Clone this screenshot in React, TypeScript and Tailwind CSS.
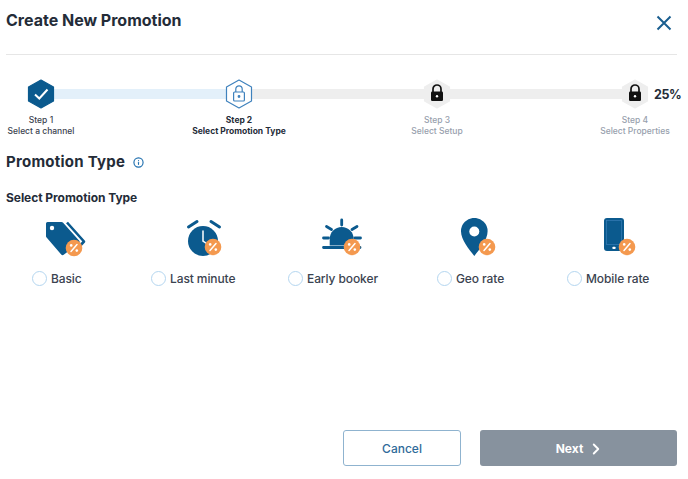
import React from 'react';
import { ChevronRight, Info } from 'lucide-react';

const BLUE = '#0b5a8e';

const Hex: React.FC<{ fill: string; stroke?: string; children?: React.ReactNode }> = ({ fill, stroke, children }) => (
  <svg width="30" height="30" viewBox="0 0 30 30" className="block">
    <polygon points="15,1 27.5,8 27.5,22 15,29 2.5,22 2.5,8" fill={fill} stroke={stroke ?? fill} strokeWidth="1.2" strokeLinejoin="round" />
    {children}
  </svg>
);

const SolidLock = () => (
  <g>
    <path d="M11 13v-3a4 4 0 0 1 8 0v3" fill="none" stroke="#111" strokeWidth="1.7" />
    <rect x="9" y="12.5" width="12" height="9.5" rx="1.2" fill="#111" />
    <circle cx="15" cy="17.2" r="1.2" fill="#fff" />
  </g>
);

const OutlineLock = () => (
  <g fill="none" stroke="#3f82bd" strokeWidth="1.2">
    <path d="M11.8 13v-3a3.2 3.2 0 0 1 6.4 0v3" />
    <rect x="9.6" y="13" width="10.8" height="9" rx="1" />
    <circle cx="15" cy="17.5" r="0.8" fill="#3f82bd" />
  </g>
);

const Badge: React.FC<{ cx: number; cy: number }> = ({ cx, cy }) => (
  <g transform={`translate(${cx} ${cy})`}>
    <circle r="8.3" fill="#f4994f" />
    <path d="M3 -3.4L-3 3.4" stroke="#fff" strokeWidth="1.5" strokeLinecap="round" />
    <circle cx="-2.8" cy="-2.6" r="1.3" fill="#fff" />
    <circle cx="2.8" cy="2.6" r="1.3" fill="#fff" />
  </g>
);

const TagIcon = () => (
  <svg width="42" height="40" viewBox="0 0 42 40" className="block">
    <path d="M1.5 4h14a2 2 0 0 1 1.4.6L33 22.5a2 2 0 0 1 0 2.8L18 36.5a2 2 0 0 1-2.8 0L.6 19.5A2 2 0 0 1 0 18V5.5A1.5 1.5 0 0 1 1.5 4z" fill={BLUE} />
    <circle cx="6" cy="10" r="2.2" fill="#fff" />
    <path d="M21 4.5L38 23.5L32 30" fill="none" stroke={BLUE} strokeWidth="2.6" strokeLinejoin="round" />
    <Badge cx={28} cy={30} />
  </svg>
);

const ClockIcon = () => (
  <svg width="40" height="40" viewBox="0 0 40 40" className="block">
    <circle cx="17" cy="23" r="15" fill={BLUE} />
    <path d="M2.5 9L11 3.5M25 3.5L33.5 9" stroke={BLUE} strokeWidth="3" strokeLinecap="round" />
    <path d="M17 13V23L22 26.5" fill="none" stroke="#fff" strokeWidth="1.5" strokeLinecap="round" />
    <Badge cx={27} cy={29} />
  </svg>
);

const SunIcon = () => (
  <svg width="42" height="40" viewBox="0 0 42 40" className="block">
    <path d="M8.7 27.5V21a12 12 0 0 1 24 0v6.5z" fill={BLUE} />
    <path d="M20.7 2V7M5.5 8.5L10.5 11.5M31 11.5L36 8.5M2.5 20H7.5M34 20H39.5M2.5 29.5H39" stroke={BLUE} strokeWidth="2.8" strokeLinecap="round" />
    <Badge cx={31} cy={29} />
  </svg>
);

const PinIcon = () => (
  <svg width="40" height="40" viewBox="0 0 40 40" className="block">
    <path d="M14.3 38C9 31 1 22 1 13.2a13.3 13.3 0 0 1 26.6 0C27.6 22 19.6 31 14.3 38z" fill={BLUE} />
    <circle cx="14.3" cy="13.5" r="5" fill="#fff" />
    <Badge cx={27} cy={29} />
  </svg>
);

const PhoneIcon = () => (
  <svg width="40" height="40" viewBox="0 0 40 40" className="block">
    <rect x="0" y="0" width="20" height="33" rx="3" fill={BLUE} />
    <rect x="2.5" y="2.5" width="15" height="24" fill="none" stroke="#3f82bd" strokeWidth="0.6" />
    <rect x="8.3" y="28.7" width="3.4" height="2.4" rx="1" fill="#fff" />
    <Badge cx={23} cy={29} />
  </svg>
);

const steps = [
  { n: 'Step 1', label: 'Select a channel', cls: 'font-medium text-[#3b4350]', icon: <Hex fill={BLUE}><path d="M9 15.5L13.3 19.5L21.5 10.5" fill="none" stroke="#fff" strokeWidth="2" /></Hex> },
  { n: 'Step 2', label: 'Select Promotion Type', cls: 'font-bold text-[#242c38]', icon: <Hex fill="#fff" stroke="#3f82bd"><OutlineLock /></Hex> },
  { n: 'Step 3', label: 'Select Setup', cls: 'font-medium text-[#97a0ad]', icon: <Hex fill="#eeeeee"><SolidLock /></Hex> },
  { n: 'Step 4', label: 'Select Properties', cls: 'font-medium text-[#97a0ad]', icon: <Hex fill="#eeeeee"><SolidLock /></Hex> },
];

const types = [
  { label: 'Basic', w: 'w-[119px]', ml: 'ml-[14px]', icon: <TagIcon /> },
  { label: 'Last minute', w: 'w-[137px]', ml: 'ml-[35px]', icon: <ClockIcon /> },
  { label: 'Early booker', w: 'w-[149px]', ml: 'ml-[33px]', icon: <SunIcon /> },
  { label: 'Geo rate', w: 'w-[130px]', ml: 'ml-[23px]', icon: <PinIcon /> },
  { label: 'Mobile rate', w: 'w-[100px]', ml: 'ml-[37px]', icon: <PhoneIcon /> },
];

export default function App() {
  return (
    <div className="flex h-[479px] w-[688px] flex-col overflow-hidden bg-white pl-[6px] pr-[11px] font-['Inter',sans-serif] text-[#242c38]">
      <div className="flex h-[55px] items-start justify-between border-b border-[#e6e6e6] pt-[10px]">
        <h1 className="text-[16px] font-bold leading-[21px]">Create New Promotion</h1>
        <svg width="16" height="16" viewBox="0 0 16 16" className="mr-[5px] mt-[5px]">
          <path d="M1.5 1.5L14.5 14.5M14.5 1.5L1.5 14.5" stroke="#1a5e8f" strokeWidth="2" />
        </svg>
      </div>

      <div className="relative mt-[24px] flex w-[664px] justify-between">
        <div className="absolute left-[35px] top-[10px] h-[10px] w-[198px] bg-[#e3f0fa]" />
        <div className="absolute left-[233px] top-[10px] h-[10px] w-[396px] bg-[#eeeeee]" />
        <span className="absolute left-[648px] top-[7px] text-[12.5px] font-bold leading-[17px] tracking-[-0.4px]">25%</span>
        {steps.map((s) => (
          <div key={s.n} className="relative flex w-[70px] flex-col items-center">
            {s.icon}
            <div className={`mt-[6px] whitespace-nowrap text-center text-[8.5px] leading-[11px] ${s.cls}`}>
              <div>{s.n}</div>
              <div>{s.label}</div>
            </div>
          </div>
        ))}
      </div>

      <div className="mt-[15px] flex items-center gap-[8px]">
        <h2 className="text-[15px] font-bold leading-[20px] tracking-[0.25px]">Promotion Type</h2>
        <Info size={11} color="#1f6fae" strokeWidth={2.5} />
      </div>

      <h3 className="mt-[18px] text-[12px] font-bold leading-[16px] tracking-[-0.05px]">Select Promotion Type</h3>

      <div className="ml-[26px] mt-[12px] flex">
        {types.map((t) => (
          <div key={t.label} className={`flex flex-col ${t.w}`}>
            <div className={t.ml}>{t.icon}</div>
            <label className="mt-[12px] flex items-center gap-[4px]">
              <span className="h-[15px] w-[15px] shrink-0 rounded-full border-[1.5px] border-[#b4d6f0] bg-white" />
              <span className="whitespace-nowrap pt-[1px] text-[12px] font-medium leading-[16px] tracking-[-0.1px] text-[#3b4350]">{t.label}</span>
            </label>
          </div>
        ))}
      </div>

      <div className="mt-auto mb-[13px] flex justify-end gap-[19px]">
        <button className="h-[36px] w-[118px] rounded-[3px] border border-[#8fb3cf] bg-white pt-[1px] text-[12px] font-medium text-[#2f6b9a]">
          Cancel
        </button>
        <button className="flex h-[36px] w-[197px] items-center justify-center gap-[4px] rounded-[3px] bg-[#87929e] pl-[4px] pt-[1px] text-[12px] font-bold text-white">
          Next
          <ChevronRight size={18} strokeWidth={2.5} />
        </button>
      </div>
    </div>
  );
}
